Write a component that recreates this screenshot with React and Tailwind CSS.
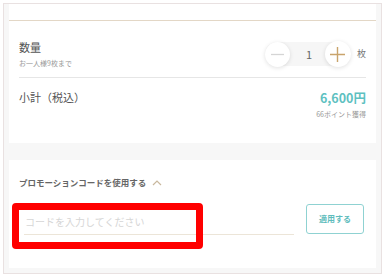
import React from "react";

export default function App() {
  const jp = { fontFamily: '"Noto Sans CJK JP", "Noto Sans", sans-serif' };
  return (
    <div className="w-[385px] h-[277px] bg-white overflow-hidden" style={jp}>
      <div className="ml-[3px] mt-[3px] w-[379px] h-[271px] border border-[#e9e1e1] bg-[#f7f7f7] px-[5px] flex flex-col">
        {/* top card */}
        <div className="bg-white h-[139px] flex flex-col">
          <div className="h-[16px]" />
          <div className="h-px bg-[#e3d7c6]" />
          <div className="px-[10px] flex flex-col">
            {/* quantity row */}
            <div className="h-[57px] flex items-center justify-between border-b border-[#e6e6e6]">
              <div className="flex flex-col mt-[9px]">
                <span className="text-[11px] leading-[14px] text-[#555]">数量</span>
                <span className="text-[7px] leading-[10px] text-[#999] mt-[4px]">お一人様9枚まで</span>
              </div>
              <div className="flex items-center mt-[10px]">
                <div className="flex items-center bg-[#f6f6f6] rounded-full h-[24px] w-[86px] justify-between">
                  <div className="w-[25px] h-[25px] rounded-full bg-white shadow-[0_1px_4px_rgba(0,0,0,0.12)] flex items-center justify-center">
                    <svg width="15" height="15" viewBox="0 0 15 15"><path d="M1 7.5H14" stroke="#d5d5d5" strokeWidth="1.3" /></svg>
                  </div>
                  <span className="text-[11px] text-[#666] ml-[3px]">1</span>
                  <div className="w-[26px] h-[26px] rounded-full bg-white shadow-[0_1px_4px_rgba(0,0,0,0.12)] flex items-center justify-center">
                    <svg width="17" height="17" viewBox="0 0 17 17"><path d="M1 8.5H16M8.5 1V16" stroke="#c9a46c" strokeWidth="1.4" /></svg>
                  </div>
                </div>
                <span className="text-[9px] text-[#777] ml-[6px]">枚</span>
              </div>
            </div>
            {/* subtotal row */}
            <div className="flex justify-between pt-[12px]">
              <span className="text-[11px] leading-[14px] text-[#555]">小計（税込）</span>
              <div className="flex flex-col items-end">
                <span className="text-[12.5px] leading-[16px] font-bold text-[#5ec1c1]">6,600円</span>
                <span className="text-[7px] leading-[10px] text-[#999] mt-[3px]">66ポイント獲得</span>
              </div>
            </div>
          </div>
        </div>
        <div className="h-[17px]" />
        {/* promo card */}
        <div className="bg-white h-[108px] flex flex-col px-[10px] relative">
          <div className="flex items-center mt-[16px]">
            <span className="text-[8.5px] leading-[12px] font-bold text-[#666]">プロモーションコードを使用する</span>
            <svg className="ml-[6px]" width="10" height="7" viewBox="0 0 10 7"><path d="M1 6L5 2L9 6" stroke="#c9b89e" strokeWidth="1.2" fill="none" /></svg>
          </div>
          <div className="flex items-end mt-[16px]">
            <div className="w-[275px] flex flex-col">
              <div className="h-[26px] flex items-center ml-[6px]">
                <span className="text-[10px] text-[#d6d6d6]">コードを入力してください</span>
              </div>
              <div className="ml-[5px] h-px bg-[#ece5d8]" />
            </div>
            <div className="ml-[12px] w-[58px] h-[30px] border border-[#8fd2d2] rounded-[3px] flex items-center justify-center mb-[1px]">
              <span className="text-[8px] font-bold text-[#5ebcbc]">適用する</span>
            </div>
          </div>
          <div className="absolute left-[3px] top-[43px] w-[191px] h-[46px] border-[7px] border-[#ff0000] rounded-[4px]" />
        </div>
      </div>
    </div>
  );
}
